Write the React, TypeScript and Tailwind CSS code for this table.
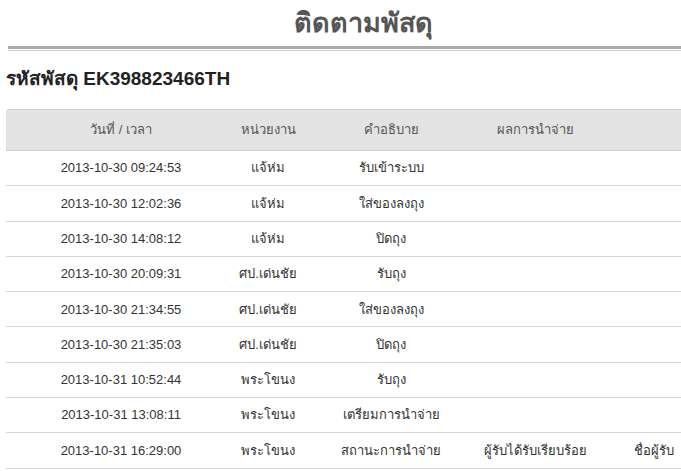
const rows = [
  ['2013-10-30 09:24:53', 'แจ้ห่ม', 'รับเข้าระบบ', '', ''],
  ['2013-10-30 12:02:36', 'แจ้ห่ม', 'ใส่ของลงถุง', '', ''],
  ['2013-10-30 14:08:12', 'แจ้ห่ม', 'ปิดถุง', '', ''],
  ['2013-10-30 20:09:31', 'ศป.เด่นชัย', 'รับถุง', '', ''],
  ['2013-10-30 21:34:55', 'ศป.เด่นชัย', 'ใส่ของลงถุง', '', ''],
  ['2013-10-30 21:35:03', 'ศป.เด่นชัย', 'ปิดถุง', '', ''],
  ['2013-10-31 10:52:44', 'พระโขนง', 'รับถุง', '', ''],
  ['2013-10-31 13:08:11', 'พระโขนง', 'เตรียมการนำจ่าย', '', ''],
  ['2013-10-31 16:29:00', 'พระโขนง', 'สถานะการนำจ่าย', 'ผู้รับได้รับเรียบร้อย', 'ชื่อผู้รับ'],
]

const cols = 'grid grid-cols-[230px_64px_182px_106px_132px]'

export default function App() {
  return (
    <div className="w-full h-[471px] overflow-hidden bg-white font-['Liberation_Sans',Tahoma,sans-serif]">
      <div className="w-[726px]">
        {/* หัวเรื่อง */}
        <div className="h-[46px] flex items-center justify-center">
          <h1 className="text-[27px] font-bold text-[#555] font-['Liberation_Sans_Narrow','Liberation_Sans',sans-serif]">ติดตามพัสดุ</h1>
        </div>
        <div className="ml-2 h-[3px] bg-[#aaa]" />
        <div className="ml-2 mt-[1px] h-[1px] bg-[#ccc]" />

        <h2 className="ml-[6px] mt-[17px] text-[19px] font-bold text-[#222] leading-[22px] font-['Liberation_Sans_Narrow','Liberation_Sans',sans-serif]">
          รหัสพัสดุ EK398823466TH
        </h2>

        {/* ตาราง */}
        <div className="ml-[6px] mt-[19px]">
          <div className={`${cols} h-[42px] items-center bg-[#e3e3e3] border-t border-b border-[#cfcfcf] rounded-tl-[4px] text-[13px] text-[#555] text-center`}>
            <div>วันที่ / เวลา</div>
            <div>หน่วยงาน</div>
            <div>คำอธิบาย</div>
            <div>ผลการนำจ่าย</div>
            <div></div>
          </div>
          {rows.map((r, i) => (
            <div key={i} className={`${cols} h-[35.3px] items-center border-b border-[#d6d6d6] text-[13px] text-[#333] text-center`}>
              {r.map((c, j) => (
                <div key={j}>{c}</div>
              ))}
            </div>
          ))}
        </div>
      </div>
    </div>
  )
}
